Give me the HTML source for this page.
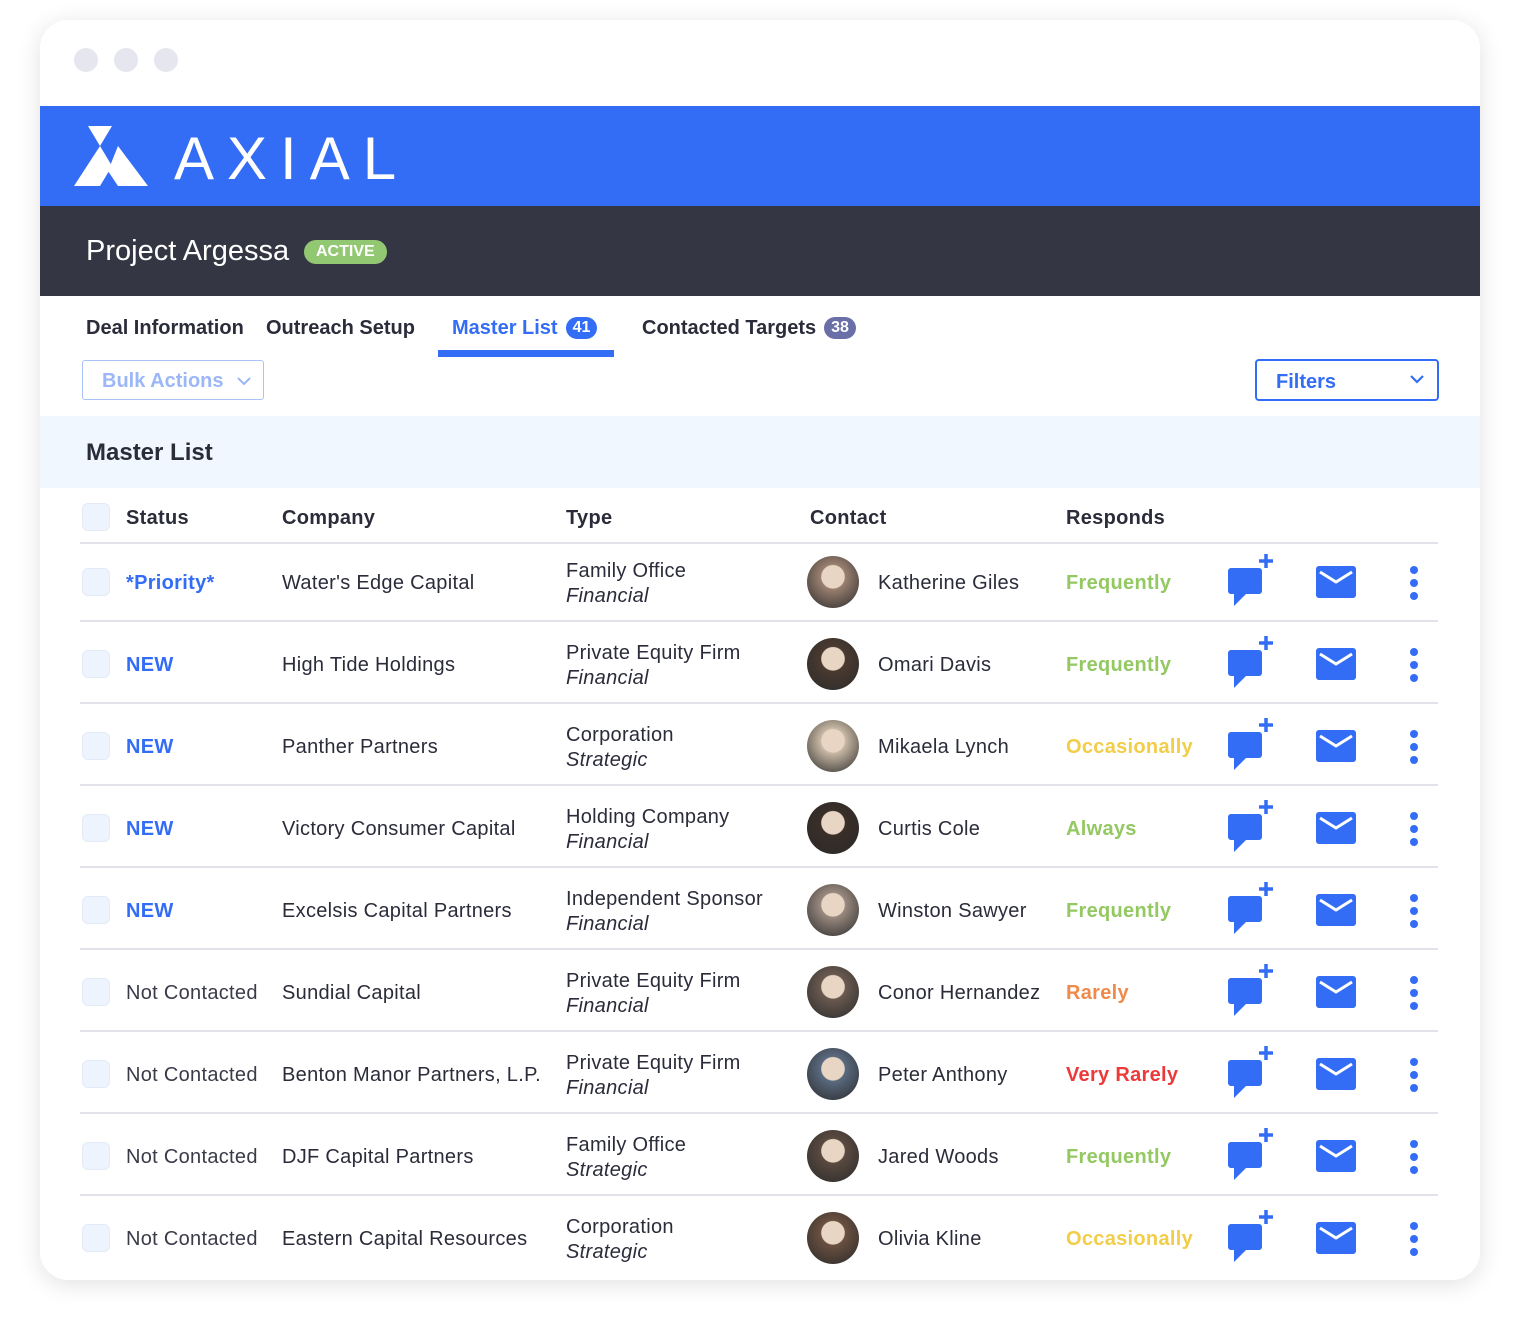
<!DOCTYPE html>
<html><head><meta charset="utf-8"><style>
*{box-sizing:border-box;margin:0;padding:0}
body{width:1520px;height:1340px;background:#fff;font-family:"Liberation Sans",sans-serif;color:#2b2c3a;position:relative;overflow:hidden}
.card{position:absolute;left:40px;top:20px;width:1440px;height:1260px;border-radius:28px;background:#fff;box-shadow:0 4px 24px rgba(0,0,0,.12);overflow:hidden}
.dot{position:absolute;top:28px;width:24px;height:24px;border-radius:50%;background:#e6e6ee}
.blue{position:absolute;left:0;top:86px;width:1440px;height:100px;background:#336df5}
.dark{position:absolute;left:0;top:186px;width:1440px;height:90px;background:#353643}
.abs{position:absolute;white-space:nowrap}
.tab{position:absolute;top:297px;font-size:20px;font-weight:bold;color:#2b2c3a}
.badge{display:inline-block;border-radius:14px;color:#fff;font-size:16px;padding:2px 7px;vertical-align:2px;margin-left:8px}
.row{position:absolute;left:40px;width:1358px;height:82px}
.cb{position:absolute;left:2px;width:28px;height:28px;border-radius:6px;background:#eef4fd;border:1px solid #e3ebf7}
.t{position:absolute;font-size:20px;white-space:nowrap;letter-spacing:0.3px}
.av{position:absolute;left:727px;width:52px;height:52px;border-radius:50%}
.line{position:absolute;left:40px;width:1358px;height:2px;background:#e2e2ea}
</style></head><body>
<div class="card">
<div class="dot" style="left:34px"></div><div class="dot" style="left:74px"></div><div class="dot" style="left:114px"></div>
<div class="blue">
<svg class="abs" style="left:34px;top:20px" width="76" height="60" viewBox="0 0 76 60"><polygon points="14,0 38,0 26,20" fill="#fff"/><polygon points="26,20 38,40 26,60 0,60" fill="#fff"/><polygon points="44,20 74,60 44,60 34,45" fill="#fff"/></svg>
<div class="abs" style="left:134px;top:18px;font-size:60px;color:#fff;letter-spacing:13px;font-weight:normal">AXIAL</div>
</div>
<div class="dark">
<div class="abs" style="left:46px;top:29px;font-size:29px;color:#fff">Project Argessa</div>
<div class="abs" style="left:264px;top:34px;background:#93c872;color:#fff;font-weight:bold;font-size:16px;padding:3px 12px;border-radius:14px">ACTIVE</div>
</div>
<div class="tab" style="left:46px">Deal Information</div>
<div class="tab" style="left:226px">Outreach Setup</div>
<div class="tab" style="left:412px;color:#336df5">Master List<span class="badge" style="background:#336df5">41</span></div>
<div class="abs" style="left:398px;top:330px;width:176px;height:7px;background:#336df5"></div>
<div class="tab" style="left:602px">Contacted Targets<span class="badge" style="background:#6b6fa8">38</span></div>
<div class="abs" style="left:42px;top:340px;width:182px;height:40px;border:1.5px solid #a9c2f8;border-radius:3px;color:#9bb7f7;font-size:20px;font-weight:bold;padding:9px 0 0 19px">Bulk Actions</div>
<svg class="abs" style="left:197px;top:356px" width="14" height="10"><path d="M1 2l6 6 6-6" stroke="#9bb7f7" stroke-width="2" fill="none"/></svg>
<div class="abs" style="left:1215px;top:339px;width:184px;height:42px;border:2px solid #336df5;border-radius:4px;color:#336df5;font-size:20px;font-weight:bold;padding:10px 0 0 19px">Filters</div>
<svg class="abs" style="left:1370px;top:354px" width="14" height="10"><path d="M1 2l6 6 6-6" stroke="#336df5" stroke-width="2.2" fill="none"/></svg>
<div class="abs" style="left:0;top:396px;width:1440px;height:72px;background:#f0f7fe"></div>
<div class="abs" style="left:46px;top:419px;font-size:24px;font-weight:bold">Master List</div>
<div class="row" style="top:456px">
<div class="cb" style="top:27px"></div>
<div class="t" style="left:46px;top:31px;font-weight:bold">Status</div>
<div class="t" style="left:202px;top:31px;font-weight:bold">Company</div>
<div class="t" style="left:486px;top:31px;font-weight:bold">Type</div>
<div class="t" style="left:730px;top:31px;font-weight:bold">Contact</div>
<div class="t" style="left:986px;top:31px;font-weight:bold">Responds</div>
</div>
<div class="line" style="top:522px"></div>
<div id="rows"></div>
</div>
<script>
var d=[["*Priority*",1,"Water's Edge Capital","Family Office","Financial","Katherine Giles","Frequently","#93c862","#9a8070"],
["NEW",1,"High Tide Holdings","Private Equity Firm","Financial","Omari Davis","Frequently","#93c862","#4a3a30"],
["NEW",1,"Panther Partners","Corporation","Strategic","Mikaela Lynch","Occasionally","#f2cd48","#c9b9a5"],
["NEW",1,"Victory Consumer Capital","Holding Company","Financial","Curtis Cole","Always","#93c862","#3a2e28"],
["NEW",1,"Excelsis Capital Partners","Independent Sponsor","Financial","Winston Sawyer","Frequently","#93c862","#9a8a80"],
["Not Contacted",0,"Sundial Capital","Private Equity Firm","Financial","Conor Hernandez","Rarely","#f08a4b","#6a5a50"],
["Not Contacted",0,"Benton Manor Partners, L.P.","Private Equity Firm","Financial","Peter Anthony","Very Rarely","#ec3a3a","#5a6a80"],
["Not Contacted",0,"DJF Capital Partners","Family Office","Strategic","Jared Woods","Frequently","#93c862","#5a4a40"],
["Not Contacted",0,"Eastern Capital Resources","Corporation","Strategic","Olivia Kline","Occasionally","#f2cd48","#6a5040"]];
var h="";
d.forEach(function(r,i){var y=524+i*82;
h+='<div class="row" style="top:'+y+'px"><div class="cb" style="top:24px"></div>'+
'<div class="t" style="left:46px;top:28px;'+(r[1]?'color:#336df5;font-weight:bold':'color:#3a3b48')+'">'+r[0]+'</div>'+
'<div class="t" style="left:202px;top:28px">'+r[2]+'</div>'+
'<div class="t" style="left:486px;top:16px">'+r[3]+'</div>'+
'<div class="t" style="left:486px;top:41px;font-style:italic">'+r[4]+'</div>'+
'<div class="av" style="top:12px;background:radial-gradient(circle at 50% 40%,#e8d5c4 0 28%,'+r[8]+' 30%,#2a2a2a 100%)"></div>'+
'<div class="t" style="left:798px;top:28px">'+r[5]+'</div>'+
'<div class="t" style="left:986px;top:28px;font-weight:bold;color:'+r[7]+'">'+r[6]+'</div>'+
'<svg class="abs" style="left:1146px;top:8px" width="52" height="58" viewBox="0 0 52 58"><rect x="2" y="16" width="34" height="26" rx="3" fill="#336df5"/><path d="M8 40v14l12-12z" fill="#336df5"/><path d="M40 2v14M33 9h14" stroke="#336df5" stroke-width="3.5"/></svg>'+
'<svg class="abs" style="left:1236px;top:22px" width="40" height="32" viewBox="0 0 40 32"><rect width="40" height="32" rx="3" fill="#336df5"/><path d="M4 6l16 10 16-10" stroke="#fff" stroke-width="3" fill="none"/></svg>'+
'<svg class="abs" style="left:1328px;top:22px" width="12" height="34"><circle cx="6" cy="4" r="4" fill="#336df5"/><circle cx="6" cy="17" r="4" fill="#336df5"/><circle cx="6" cy="30" r="4" fill="#336df5"/></svg>'+
'</div>';
if(i<8)h+='<div class="line" style="top:'+(y+76)+'px"></div>';});
document.getElementById('rows').innerHTML=h;
</script>
</body></html>
